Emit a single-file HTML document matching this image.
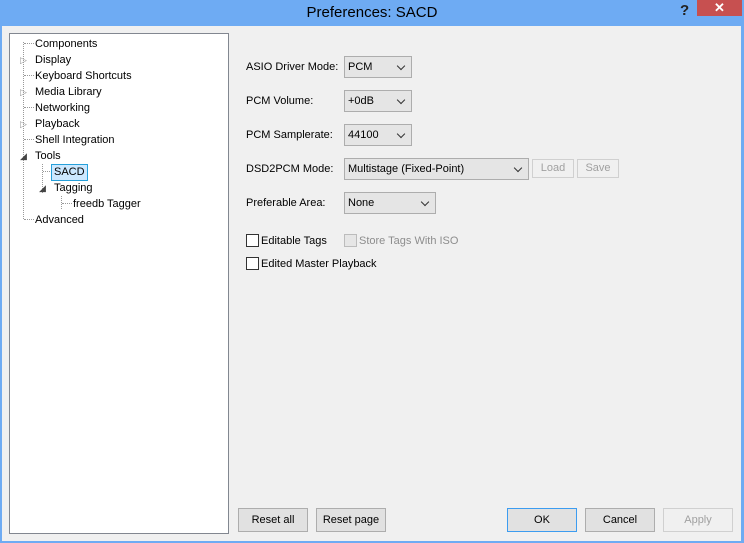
<!DOCTYPE html>
<html><head><style>
*{margin:0;padding:0;box-sizing:border-box}
body{width:744px;height:543px;background:#6eabf3;font-family:"Liberation Sans",sans-serif;font-size:11px;color:#000;position:relative;overflow:hidden}
.abs{position:absolute}
.title{left:0;top:0;width:744px;height:26px;text-align:center;line-height:25px;font-size:15px;color:#000}
.client{left:2px;top:26px;width:739px;height:515px;background:#f0f0f0}
.tree{left:9px;top:33px;width:220px;height:501px;background:#fff;border:1px solid #828790}
.ti{position:absolute;white-space:nowrap;line-height:14px}
.dot{position:absolute;border-top:1px dotted #999;height:0}
.vd{position:absolute;border-left:1px dotted #999;width:0}
.lbl{position:absolute;white-space:nowrap}
.sel{position:absolute;border:1px solid #adadad;background:#e5e5e5;height:22px;padding-left:3px;line-height:20px}
.sel:after{content:"";position:absolute;right:7px;top:6px;width:5px;height:5px;border-right:1.5px solid #333;border-bottom:1.5px solid #333;transform:rotate(45deg)}
.btn{position:absolute;border:1px solid #adadad;background:#e1e1e1;height:24px;text-align:center;line-height:22px}
.cb{position:absolute;width:13px;height:13px;border:1px solid #333;background:#fff}
</style></head><body>
<div class="abs title">Preferences: SACD</div>
<div class="abs" style="left:680px;top:2px;font-weight:bold;font-size:15px;color:#222">?</div>
<div class="abs" style="left:697px;top:0;width:45px;height:16px;background:#c75050;color:#fff;text-align:center;font-size:13px;line-height:15px;font-weight:bold">✕</div>
<div class="abs client"></div>
<div class="abs tree">
 <div class="vd" style="left:13px;top:8px;height:177px"></div>
 <div class="vd" style="left:32px;top:130px;height:29px"></div>
 <div class="vd" style="left:51px;top:162px;height:13px"></div>
 <div class="dot" style="left:14px;top:9px;width:10px"></div><div class="ti" style="left:25px;top:3px">Components</div>
 <div class="ti" style="left:10px;top:19px;color:#999;font-size:9px">▷</div><div class="ti" style="left:25px;top:19px">Display</div>
 <div class="dot" style="left:14px;top:41px;width:10px"></div><div class="ti" style="left:25px;top:35px">Keyboard Shortcuts</div>
 <div class="ti" style="left:10px;top:51px;color:#999;font-size:9px">▷</div><div class="ti" style="left:25px;top:51px">Media Library</div>
 <div class="dot" style="left:14px;top:73px;width:10px"></div><div class="ti" style="left:25px;top:67px">Networking</div>
 <div class="ti" style="left:10px;top:83px;color:#999;font-size:9px">▷</div><div class="ti" style="left:25px;top:83px">Playback</div>
 <div class="dot" style="left:14px;top:105px;width:10px"></div><div class="ti" style="left:25px;top:99px">Shell Integration</div>
 <div class="ti" style="left:10px;top:115px;color:#444;font-size:9px">◢</div><div class="ti" style="left:25px;top:115px">Tools</div>
 <div class="dot" style="left:33px;top:137px;width:9px"></div><div class="ti" style="left:41px;top:130px;background:#cce8ff;border:1px solid #26a0da;padding:0 2px 1px">SACD</div>
 <div class="ti" style="left:29px;top:147px;color:#444;font-size:9px">◢</div><div class="ti" style="left:44px;top:147px">Tagging</div>
 <div class="dot" style="left:52px;top:169px;width:10px"></div><div class="ti" style="left:63px;top:163px">freedb Tagger</div>
 <div class="dot" style="left:14px;top:185px;width:10px"></div><div class="ti" style="left:25px;top:179px">Advanced</div>
</div>
<div class="lbl" style="left:246px;top:61px">ASIO Driver Mode:</div>
<div class="sel" style="left:344px;top:56px;width:68px">PCM</div>
<div class="lbl" style="left:246px;top:95px">PCM Volume:</div>
<div class="sel" style="left:344px;top:90px;width:68px">+0dB</div>
<div class="lbl" style="left:246px;top:129px">PCM Samplerate:</div>
<div class="sel" style="left:344px;top:124px;width:68px">44100</div>
<div class="lbl" style="left:246px;top:163px">DSD2PCM Mode:</div>
<div class="sel" style="left:344px;top:158px;width:185px">Multistage (Fixed-Point)</div>
<div class="btn" style="left:532px;top:159px;width:42px;height:19px;line-height:17px;color:#a0a0a0;background:#f0f0f0;border-color:#d0d0d0">Load</div>
<div class="btn" style="left:577px;top:159px;width:42px;height:19px;line-height:17px;color:#a0a0a0;background:#f0f0f0;border-color:#d0d0d0">Save</div>
<div class="lbl" style="left:246px;top:197px">Preferable Area:</div>
<div class="sel" style="left:344px;top:192px;width:92px">None</div>
<div class="cb" style="left:246px;top:234px"></div><div class="lbl" style="left:261px;top:235px">Editable Tags</div>
<div class="cb" style="left:344px;top:234px;border-color:#bcbcbc;background:#e6e6e6"></div><div class="lbl" style="left:359px;top:235px;color:#8d8d8d">Store Tags With ISO</div>
<div class="cb" style="left:246px;top:257px"></div><div class="lbl" style="left:261px;top:258px">Edited Master Playback</div>
<div class="btn" style="left:238px;top:508px;width:70px">Reset all</div>
<div class="btn" style="left:316px;top:508px;width:70px">Reset page</div>
<div class="btn" style="left:507px;top:508px;width:70px;border-color:#3c9cf0">OK</div>
<div class="btn" style="left:585px;top:508px;width:70px">Cancel</div>
<div class="btn" style="left:663px;top:508px;width:70px;color:#a0a0a0;background:#f0f0f0;border-color:#d0d0d0">Apply</div>
</body></html>
